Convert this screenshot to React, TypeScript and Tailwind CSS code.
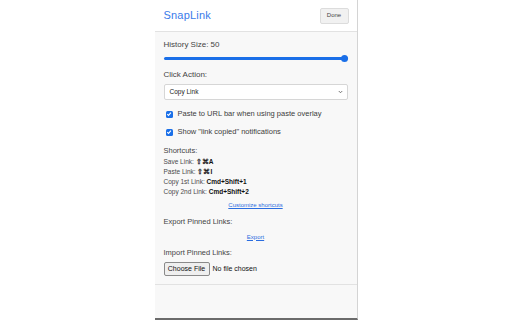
import React from 'react';

const shortcuts = [
  { label: 'Save Link:', keys: '⇧⌘A' },
  { label: 'Paste Link:', keys: '⇧⌘I' },
  { label: 'Copy 1st Link:', keys: 'Cmd+Shift+1' },
  { label: 'Copy 2nd Link:', keys: 'Cmd+Shift+2' },
];

const Check: React.FC<{ label: string }> = ({ label }) => (
  <div className="flex items-center h-[14px] pl-[2px] gap-[5px]">
    <span className="w-[7px] h-[7px] rounded-[1.5px] bg-[#1a6fe8] flex items-center justify-center">
      <svg width="6" height="6" viewBox="0 0 10 10">
        <path d="M2 5.2 L4.2 7.4 L8.2 2.6" fill="none" stroke="#fff" strokeWidth="1.8" />
      </svg>
    </span>
    <span className="text-[7.5px] text-[#3c3c3c]">{label}</span>
  </div>
);

export default function App() {
  return (
    <div className="w-[512px] h-[320px] bg-white flex justify-center font-['Liberation_Sans',Arial,sans-serif]">
      <div className="w-[203px] h-[320px] flex flex-col bg-[#f8f8f8] border-r border-[#d4d4d4] border-b-2 border-b-[#6b6b6b]">
        <div className="h-[32px] shrink-0 bg-white border-b border-[#e2e2e2] flex items-center justify-between pl-[9px] pr-[8px]">
          <span className="text-[11px] text-[#3a7bea] tracking-[0.2px]">SnapLink</span>
          <button className="w-[29px] h-[16px] rounded-[2px] border border-[#dcdcdc] bg-[#f1f1f1] text-[6px] text-[#444]">
            Done
          </button>
        </div>

        <div className="px-[9px] pb-[8px] border-b border-[#e2e2e2] flex flex-col text-[#444]">
          <div className="h-[14px] mt-[6px] flex items-center text-[8px]">History Size: 50</div>
          <div className="h-[12px] relative flex items-center">
            <div className="w-full h-[3px] rounded-full bg-[#1a6fe8]" />
            <div className="absolute right-[0px] w-[7px] h-[7px] rounded-full bg-[#1a6fe8]" />
          </div>

          <div className="h-[14px] mt-[4px] flex items-center text-[8px]">Click Action:</div>
          <div className="h-[16px] mt-[2px] bg-white border border-[#d6d6d6] rounded-[2px] flex items-center justify-between pl-[5px] pr-[4px]">
            <span className="text-[6.5px] text-[#222]">Copy Link</span>
            <svg width="5" height="4" viewBox="0 0 10 8">
              <path d="M1.5 2 L5 5.5 L8.5 2" fill="none" stroke="#555" strokeWidth="1.6" />
            </svg>
          </div>

          <div className="mt-[7px]">
            <Check label="Paste to URL bar when using paste overlay" />
          </div>
          <div className="mt-[4px]">
            <Check label='Show "link copied" notifications' />
          </div>

          <div className="h-[13px] mt-[5px] flex items-center text-[7.5px]">Shortcuts:</div>
          {shortcuts.map((s) => (
            <div key={s.label} className="h-[10px] flex items-center text-[6.5px] text-[#4a4a4a]">
              <span>{s.label}&nbsp;</span>
              <span className="font-bold text-[#111]">{s.keys}</span>
            </div>
          ))}

          <div className="h-[12px] mt-[2px] flex items-center justify-center">
            <a className="text-[6px] text-[#2a6de0] underline">Customize shortcuts</a>
          </div>

          <div className="h-[14px] mt-[4px] flex items-center text-[7.5px]">Export Pinned Links:</div>
          <div className="h-[12px] mt-[2px] flex items-center justify-center">
            <a className="text-[6px] text-[#2a6de0] underline">Export</a>
          </div>

          <div className="h-[14px] mt-[3px] flex items-center text-[7.5px]">Import Pinned Links:</div>
          <div className="h-[14px] mt-[2px] flex items-center gap-[3px]">
            <button className="h-[14px] w-[46px] rounded-[2px] border border-[#8a8a8a] bg-[#efefef] text-[7px] text-[#111]">
              Choose File
            </button>
            <span className="text-[7px] text-[#111]">No file chosen</span>
          </div>
        </div>
        <div className="flex-1" />
      </div>
    </div>
  );
}
